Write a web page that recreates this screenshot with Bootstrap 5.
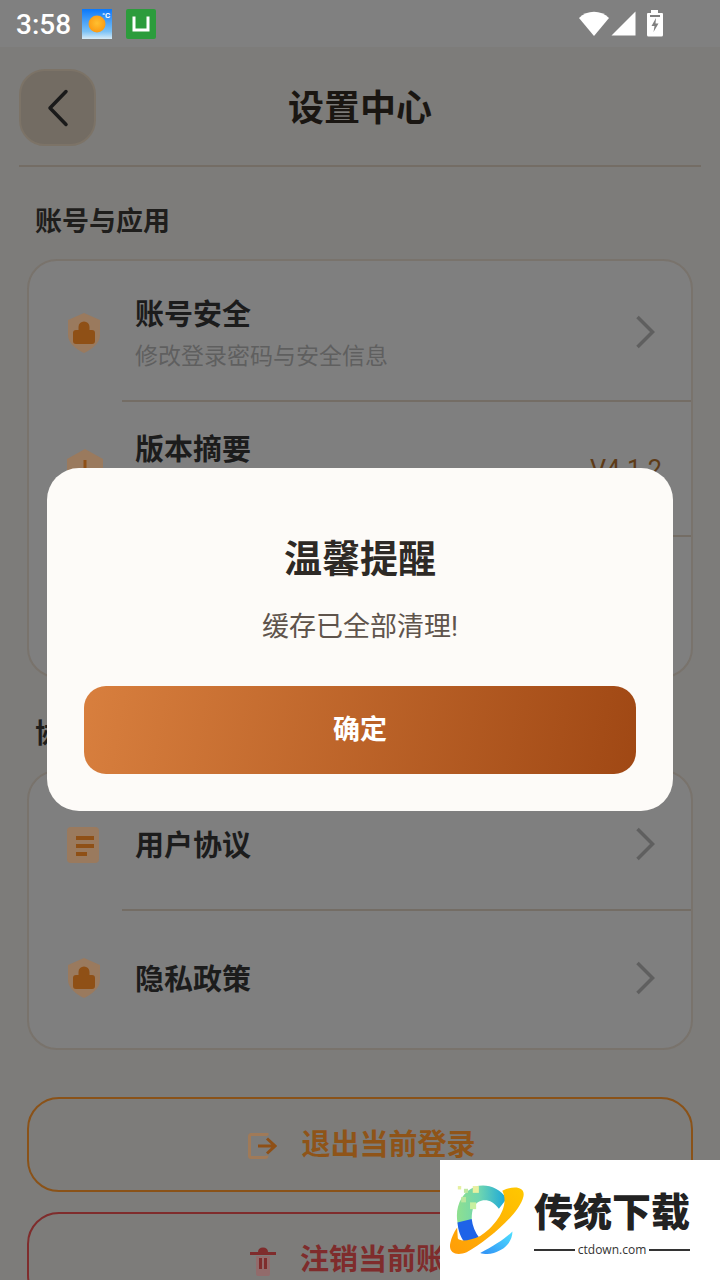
<!DOCTYPE html>
<html lang="zh">
<head>
  <meta charset="UTF-8">
  <meta name="viewport" content="width=device-width, initial-scale=1">
  <title>设置中心</title>
  <link href="https://cdn.jsdelivr.net/npm/bootstrap@5.3.3/dist/css/bootstrap.min.css" rel="stylesheet">
  <style>
    html, body { width: 720px; height: 1280px; overflow: hidden; }
    body { background: #7d7c7a; font-family: Roboto, "Noto Sans CJK SC", sans-serif; color: #1c1b1a; position: relative; }
    .status-strip { height: 47px; background: #808080; color: #fff; padding-left: 16px; }
    .status-time { font-size: 28px; font-weight: 500; line-height: 1; width: 66px; margin-top: 2px; }
    .green-tile { margin-left: 14px; }
    .status-right { margin-left: auto; padding-right: 56px; gap: 2px; }

    .page-wrap { padding: 22px 27px 0; }
    .top-head { margin: 0 -8px; padding-bottom: 19px; border-bottom: 2px solid #746d65; }
    .back-btn { width: 77px; height: 77px; border-radius: 26px; background: #736c63; border: 2px solid #7c7367; }
    .head-title { font-size: 36px; font-weight: 700; line-height: 1; color: #1a1612; padding-top: 3px; }
    .head-side { width: 77px; }

    .sect-title { height: 40px; line-height: 40px; padding: 1px 0 0 8px; font-size: 27px; font-weight: 700; color: #1f1e1c; }
    .sect-one { margin-top: 34px; margin-bottom: 18px; }
    .sect-two { margin-top: 35px; margin-bottom: 17px; }

    .set-box { background: #7f7f7f; border: 2px solid #79736c; border-radius: 30px; overflow: hidden; }
    .box-one { height: 419px; padding-top: 6px; }
    .box-two { height: 280px; padding-top: 7px; }
    .set-row { height: 135px; }
    .box-two .set-row { height: 132px; }
    .set-row:last-child { height: 133px; }
    .icon-cell { width: 93px; flex: none; padding-left: 38px; }
    .lift-two { margin-bottom: 4px; }
    .row-main { height: 100%; padding: 0 36px 0 13px; border-bottom: 2px solid #746d65; }
    .set-row:last-child .row-main { border-bottom: 0; }
    .row-name { font-size: 29px; font-weight: 700; line-height: 40px; color: #1c1c1c; padding-top: 4px; }
    .row-desc { font-size: 23px; line-height: 40px; color: #5f5f5f; padding-top: 2px; }
    .row-value { font-size: 25.3px; line-height: 1; color: #5e3b17; margin-right: -7px; padding-top: 2px; }

    .line-btn { height: 95px; border-radius: 32px; background: transparent; font-size: 29px; font-weight: 700; gap: 24px; padding: 3px 0 0 4px; }
    .line-exit { margin-top: 47px; border: 2px solid #8a5218; color: #8f5418; }
    .line-drop { margin-top: 20px; border: 2px solid #7f2c2c; color: #7f2c2c; }

    .notice-box { position: absolute; left: 47px; top: 468px; width: 626px; height: 343px; background: #fdfbf8; border-radius: 32px; padding: 68px 37px 0; }
    .notice-title { font-size: 38px; font-weight: 700; line-height: 46px; color: #2e2a26; }
    .notice-text { font-size: 27px; line-height: 40px; margin-top: 25px; color: #5f544c; }
    .notice-btn { height: 88px; width: 100%; margin-top: 39px; border: 0; border-radius: 22px; padding-top: 2px; background: linear-gradient(100deg, #d87f3e 0%, #a04814 100%); color: #fff; font-size: 27px; font-weight: 700; }

    .mark-box { position: absolute; left: 440px; top: 1160px; width: 280px; height: 120px; background: #fff; padding: 24px 0 0 9px; gap: 9px; }
    .mark-name { font-size: 39px; font-weight: 900; line-height: 46px; color: #222; margin-top: 6px; width: 156px; white-space: nowrap; }
    .mark-url { margin-top: 6px; width: 156px; font-size: 12px; line-height: 16px; color: #333; gap: 3px; font-family: "Open Sans", sans-serif; }
    .mark-url i { flex: 1; height: 2px; background: #333; }
  </style>
</head>
<body>
  <div class="status-strip d-flex align-items-center">
    <div class="status-time">3:58</div>
    <svg width="30" height="30" viewBox="0 0 30 30">
      <defs>
        <linearGradient id="sky" x1="0" y1="0" x2="0" y2="1"><stop offset="0" stop-color="#0a78fb"/><stop offset=".75" stop-color="#7cc2f5"/><stop offset="1" stop-color="#d8ecf8"/></linearGradient>
        <radialGradient id="sun" cx=".5" cy=".45" r=".55"><stop offset="0" stop-color="#ffc030"/><stop offset="1" stop-color="#fb9a12"/></radialGradient>
      </defs>
      <rect width="30" height="30" fill="url(#sky)"/>
      <circle cx="15" cy="15" r="8.500" fill="url(#sun)"/>
      <text x="20" y="9" font-size="8" font-weight="700" fill="#fff" font-family="Roboto">°C</text>
    </svg>
    <svg width="30" height="30" viewBox="0 0 30 30" class="green-tile">
      <rect width="30" height="30" rx="2" fill="#2c9c3c"/>
      <path d="M8 7.500V21H22V7.500" fill="none" stroke="#fff" stroke-width="3"/>
    </svg>
    <div class="status-right d-flex align-items-center">
      <svg width="30" height="26" viewBox="0 0 30 26"><path d="M0 7C8-1.500 22-1.500 30 7L15 25Z" fill="#fff"/></svg>
      <svg width="25" height="25" viewBox="0 0 25 25"><path d="M24.500 0.500V24.500H0.500Z" fill="#fff"/></svg>
      <svg width="18" height="27" viewBox="0 0 18 27" class="ms-2">
        <path d="M5 0H12V3H16a1 1 0 0 1 1 1V25a1.500 1.500 0 0 1-1.500 1.500H2.500A1.500 1.500 0 0 1 1 25V4a1 1 0 0 1 1-1H5Z" fill="#fff"/>
        <path d="M10 8L5.500 16H8.500L7.500 22L12.500 13.500H9.500Z" fill="#808080"/>
        <rect x="4" y="5" width="10" height="2" fill="#808080"/>
      </svg>
    </div>
  </div>

  <div class="page-wrap">
    <div class="top-head d-flex align-items-center">
      <div class="back-btn d-flex align-items-center justify-content-center">
        <svg width="24" height="38" viewBox="0 0 24 38"><path d="M20 2.500L4 19L20 35.500" fill="none" stroke="#1a1a1a" stroke-width="3.500" stroke-linecap="round" stroke-linejoin="round"/></svg>
      </div>
      <div class="head-title flex-grow-1 text-center">设置中心</div>
      <div class="head-side"></div>
    </div>

    <div class="sect-title sect-one">账号与应用</div>
    <div class="set-box box-one">
      <div class="set-row d-flex align-items-center">
        <div class="icon-cell d-flex">
          <svg width="34" height="40" viewBox="0 0 34 40" class="lift-two"><path d="M17 0L33 7V22C33 30 25 36 17 40C9 36 1 30 1 22V7Z" fill="#9a7a5e"/><path d="M11.500 17V14a5.500 5.500 0 0 1 11 0V17H25a3 3 0 0 1 3 3V28a3 3 0 0 1-3 3H9a3 3 0 0 1-3-3V20a3 3 0 0 1 3-3Z" fill="#8f5016"/></svg>
        </div>
        <div class="row-main flex-grow-1 d-flex align-items-center justify-content-between">
          <div>
            <div class="row-name">账号安全</div>
            <div class="row-desc">修改登录密码与安全信息</div>
          </div>
          <svg width="20" height="34" viewBox="0 0 20 34" class="lift-two"><path d="M2.500 2L17.500 17L2.500 32" fill="none" stroke="#5f5f5f" stroke-width="3.500"/></svg>
        </div>
      </div>
      <div class="set-row d-flex align-items-center">
        <div class="icon-cell d-flex">
          <svg width="36" height="42" viewBox="0 0 36 42"><path d="M18 0L36 10V32L18 42L0 32V10Z" fill="#9a7a5e"/><rect x="16.500" y="11" width="3" height="12" fill="#8f5016"/></svg>
        </div>
        <div class="row-main flex-grow-1 d-flex align-items-center justify-content-between">
          <div>
            <div class="row-name">版本摘要</div>
            <div class="row-desc">查看当前版本信息</div>
          </div>
          <div class="row-value">V4.1.2</div>
        </div>
      </div>
      <div class="set-row d-flex align-items-center">
        <div class="icon-cell"></div>
        <div class="row-main flex-grow-1 d-flex align-items-center">
          <div class="row-name">清理缓存</div>
        </div>
      </div>
    </div>

    <div class="sect-title sect-two">协议与隐私</div>
    <div class="set-box box-two">
      <div class="set-row d-flex align-items-center">
        <div class="icon-cell d-flex">
          <svg width="32" height="36" viewBox="0 0 32 36"><rect width="32" height="36" rx="4" fill="#9a7a5e"/><path d="M9 11H27M9 19H27M9 27H20" stroke="#8f5016" stroke-width="4"/></svg>
        </div>
        <div class="row-main flex-grow-1 d-flex align-items-center justify-content-between">
          <div class="row-name">用户协议</div>
          <svg width="20" height="34" viewBox="0 0 20 34"><path d="M2.500 2L17.500 17L2.500 32" fill="none" stroke="#5f5f5f" stroke-width="3.500"/></svg>
        </div>
      </div>
      <div class="set-row d-flex align-items-center">
        <div class="icon-cell d-flex">
          <svg width="34" height="40" viewBox="0 0 34 40"><path d="M17 0L33 7V22C33 30 25 36 17 40C9 36 1 30 1 22V7Z" fill="#9a7a5e"/><path d="M11.500 17V14a5.500 5.500 0 0 1 11 0V17H25a3 3 0 0 1 3 3V28a3 3 0 0 1-3 3H9a3 3 0 0 1-3-3V20a3 3 0 0 1 3-3Z" fill="#8f5016"/></svg>
        </div>
        <div class="row-main flex-grow-1 d-flex align-items-center justify-content-between">
          <div class="row-name">隐私政策</div>
          <svg width="20" height="34" viewBox="0 0 20 34"><path d="M2.500 2L17.500 17L2.500 32" fill="none" stroke="#5f5f5f" stroke-width="3.500"/></svg>
        </div>
      </div>
    </div>

    <div class="line-btn line-exit d-flex align-items-center justify-content-center">
      <svg width="29" height="26" viewBox="0 0 29 26"><path d="M19 2.500V1.500H3A1.500 1.500 0 0 0 1.500 3V23A1.500 1.500 0 0 0 3 24.500H17A2 2 0 0 0 19 22.500" fill="none" stroke="#a07a58" stroke-width="3"/><path d="M10 13H26M19 5.500L27 13L19 20.500" fill="none" stroke="#8f5016" stroke-width="3"/></svg>
      <span>退出当前登录</span>
    </div>
    <div class="line-btn line-drop d-flex align-items-center justify-content-center">
      <svg width="26" height="29" viewBox="0 0 26 29"><path d="M6 9H20V27a2 2 0 0 1-2 2H8a2 2 0 0 1-2-2Z" fill="#926b6b"/><path d="M0 5H8C8 2 10 0.500 13 0.500S18 2 18 5H26V8H0Z" fill="#7f2c2c"/><path d="M10.500 11V22M15.500 11V22" stroke="#7f2c2c" stroke-width="3"/></svg>
      <span>注销当前账号</span>
    </div>
  </div>

  <div class="notice-box text-center">
    <div class="notice-title">温馨提醒</div>
    <div class="notice-text">缓存已全部清理!</div>
    <button class="notice-btn d-block">确定</button>
  </div>

  <div class="mark-box d-flex">
    <svg width="76" height="72" viewBox="58 102 224 212" class="flex-shrink-0">
      <defs>
        <linearGradient id="ringC" x1="0" y1="0" x2="1" y2="0"><stop offset="0" stop-color="#8fe08f"/><stop offset=".45" stop-color="#6fd6b0"/><stop offset="1" stop-color="#18a6dc"/></linearGradient>
        <linearGradient id="ringO" x1="0" y1="1" x2="1" y2="0"><stop offset="0" stop-color="#ff9c08"/><stop offset="1" stop-color="#ffc800"/></linearGradient>
        <linearGradient id="ringB" x1="0" y1="1" x2="1" y2="0"><stop offset="0" stop-color="#2f8ff5"/><stop offset="1" stop-color="#4fe0ff"/></linearGradient>
      </defs>
      <path d="M228 145C205 110 165 100 135 110C95 125 75 170 83 215C85 225 87 232 90 240L125 205C125 190 127 180 130 170C145 145 180 140 205 175Z" fill="url(#ringC)"/>
      <path d="M83 215C85 240 92 258 103 272L148 262C135 245 127 225 125 205Z" fill="#1e63e8"/>
      <path d="M215 122C250 105 285 110 277 140C265 190 170 270 110 303C80 315 55 305 62 275C65 260 72 245 82 230L84 262C88 272 120 270 150 255C190 230 240 170 215 122Z" fill="url(#ringO)"/>
      <path d="M150 305C190 285 225 262 245 242C245 270 225 295 190 305C175 310 160 308 150 305Z" fill="url(#ringB)"/>
      <rect x="84" y="108" width="10" height="10" fill="#e6f0a0"/>
      <rect x="102" y="116" width="12" height="12" fill="#bfe8a0"/>
      <rect x="128" y="108" width="18" height="20" fill="#e8f0a0"/>
      <rect x="94" y="140" width="14" height="16" fill="#bce8a0"/>
      <rect x="120" y="156" width="18" height="20" fill="#c8f0a0"/>
    </svg>
    <div>
      <div class="mark-name">传统下载</div>
      <div class="mark-url d-flex align-items-center"><i></i><span>ctdown.com</span><i></i></div>
    </div>
  </div>
</body>
</html>
